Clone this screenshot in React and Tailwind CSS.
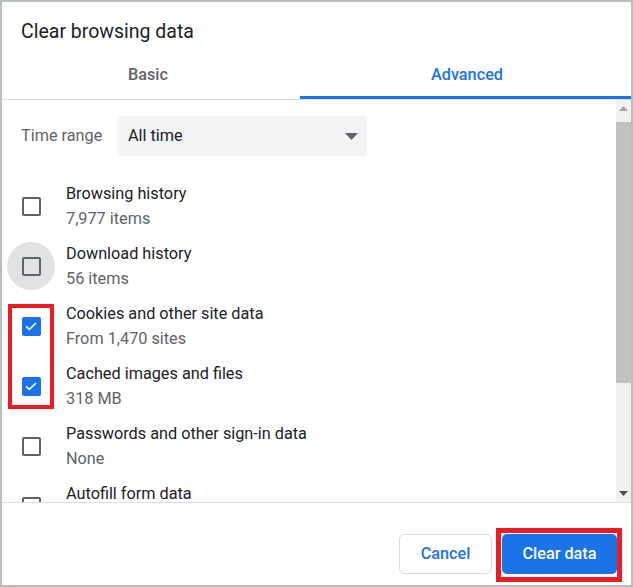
import React from 'react';

const ITEMS = [
  { title: 'Browsing history', sub: '7,977 items', checked: false },
  { title: 'Download history', sub: '56 items', checked: false, hover: true },
  { title: 'Cookies and other site data', sub: 'From 1,470 sites', checked: true },
  { title: 'Cached images and files', sub: '318 MB', checked: true },
  { title: 'Passwords and other sign-in data', sub: 'None', checked: false },
  { title: 'Autofill form data', sub: '', checked: false },
];

function Checkbox({ checked }) {
  if (checked) {
    return (
      <div className="w-[19px] h-[19px] rounded-[2px] bg-[#1a73e8] flex items-center justify-center">
        <svg width="16" height="16" viewBox="0 0 24 24" aria-hidden="true">
          <path d="M4.5 12.5l5 4.5L19.5 7.5" fill="none" stroke="#fff" strokeWidth="2.3" />
        </svg>
      </div>
    );
  }
  return <div className="w-[19px] h-[19px] rounded-[2px] border-2 border-[#5f6368]" />;
}

function Row({ item }) {
  return (
    <div className="h-[60px] flex items-center shrink-0">
      <div
        className={`ml-[5px] w-12 h-12 rounded-full flex items-center justify-center ${
          item.hover ? 'bg-[#e1e2e4]' : ''
        }`}
      >
        <Checkbox checked={item.checked} />
      </div>
      <div className="ml-[11px] text-[16.25px] leading-[25px]">
        <div className="text-[#202124]">{item.title}</div>
        <div className="text-[#5f6368]">{item.sub || '\u00a0'}</div>
      </div>
    </div>
  );
}

export default function App() {
  return (
    <div className="relative w-[633px] h-[587px] border-2 border-[#b6bebe] bg-white flex flex-col font-['Roboto',sans-serif] overflow-hidden">
      {/* header */}
      <div className="pl-[19px] pt-[17px] pb-[5px] text-[19.5px] leading-[26px] text-[#202124]">
        Clear browsing data
      </div>

      {/* tabs */}
      <div className="flex border-b border-[#dadce0]">
        <div className="w-[298px] h-[49px] pt-1 pr-[6px] flex items-center justify-center border-b-[3px] border-transparent text-[16.25px] font-medium text-[#5f6368]">
          Basic
        </div>
        <div className="flex-1 h-[49px] pt-1 pl-[3px] flex items-center justify-center border-b-[3px] border-[#1a73e8] text-[16.25px] font-medium text-[#1a73e8]">
          Advanced
        </div>
      </div>

      {/* scroll area */}
      <div className="h-[403px] flex border-b border-[#dadce0]">
        <div className="flex-1 overflow-hidden flex flex-col">
          <div className="pt-[16px] pl-[19px] flex items-center shrink-0">
            <div className="w-[96px] text-[16.25px] text-[#5f6368]">Time range</div>
            <div className="w-[250px] h-[40px] rounded-[4px] bg-[#f1f3f4] flex items-center justify-between pl-[11px] pr-[9px]">
              <span className="text-[16.25px] text-[#202124]">All time</span>
              <svg width="13" height="7" viewBox="0 0 13 7" aria-hidden="true">
                <polygon points="0,0 13,0 6.5,7" fill="#5f6368" />
              </svg>
            </div>
          </div>
          <div className="mt-[20px] flex flex-col">
            {ITEMS.map((item) => (
              <Row key={item.title} item={item} />
            ))}
          </div>
        </div>

        {/* scrollbar */}
        <div className="w-[15px] bg-[#f1f1f1] flex flex-col">
          <div className="h-[17px] flex items-center justify-center">
            <svg width="9" height="5" viewBox="0 0 9 5" aria-hidden="true">
              <polygon points="0,5 9,5 4.5,0" fill="#a3a3a3" />
            </svg>
          </div>
          <div className="flex-1 pt-[5px]">
            <div className="h-[261px] bg-[#c1c1c1]" />
          </div>
          <div className="h-[17px] flex items-center justify-center">
            <svg width="9" height="5" viewBox="0 0 9 5" aria-hidden="true">
              <polygon points="0,0 9,0 4.5,5" fill="#505050" />
            </svg>
          </div>
        </div>
      </div>

      {/* footer */}
      <div className="flex-1 flex justify-end items-start gap-[10px] pt-[31px] pr-[14px]">
        <button className="w-[93px] h-[40px] rounded-[5px] border border-[#dadce0] bg-white text-[16.25px] font-medium text-[#1a73e8]">
          Cancel
        </button>
        <button className="w-[115px] h-[40px] rounded-[5px] bg-[#1a73e8] text-[16.25px] font-medium text-white">
          Clear data
        </button>
      </div>

      {/* annotation boxes */}
      <div className="absolute left-[6px] top-[302px] w-[46px] h-[105px] border-4 border-[#ed1c24]" />
      <div className="absolute left-[494px] top-[526px] w-[126px] h-[54px] border-[5px] border-[#ed1c24]" />
    </div>
  );
}
